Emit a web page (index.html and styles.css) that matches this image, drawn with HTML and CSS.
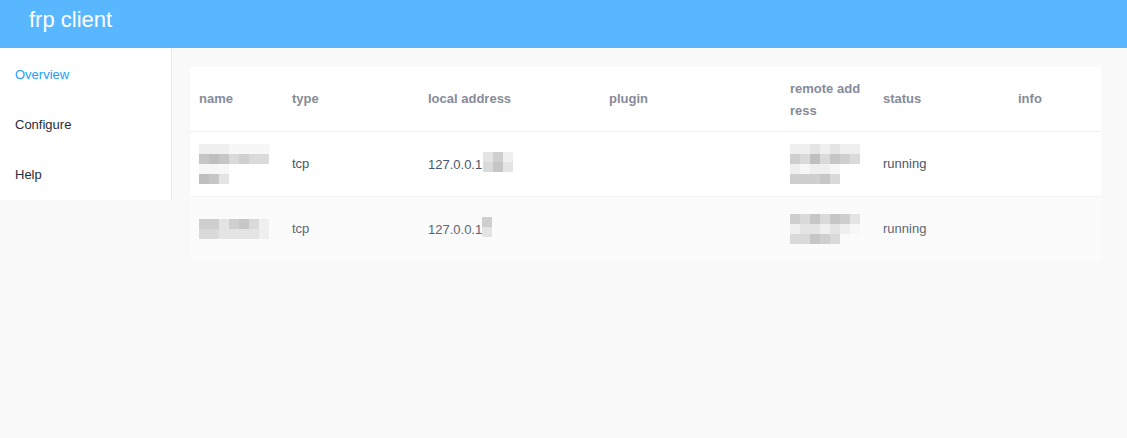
FILE: index.html
```html
<!DOCTYPE html>
<html>
<head>
<meta charset="utf-8">
<title>frp client</title>
<link rel="stylesheet" href="styles.css">
</head>
<body>
<header class="topbar"><span class="brand">frp client</span></header>
<div class="layout">
  <aside class="sidebar">
    <ul class="menu">
      <li class="menu-item active">Overview</li>
      <li class="menu-item">Configure</li>
      <li class="menu-item">Help</li>
    </ul>
  </aside>
  <main class="main">
    <table class="proxies">
      <colgroup>
        <col class="c-name"><col class="c-type"><col class="c-local"><col class="c-plugin"><col class="c-remote"><col class="c-status"><col class="c-info">
      </colgroup>
      <thead>
        <tr>
          <th>name</th><th>type</th><th>local address</th><th>plugin</th><th class="wrap">remote address</th><th>status</th><th>info</th>
        </tr>
      </thead>
      <tbody>
        <tr class="row-1">
          <td>
            <div class="pix">
              <div class="pr"><i class="q6"></i><i class="q6"></i><i class="q6"></i><i class="q7"></i><i class="q7"></i><i class="q7"></i><i class="q7"></i></div>
              <div class="pr"><i class="q2"></i><i class="q1"></i><i class="q2"></i><i class="q4"></i><i class="q3"></i><i class="q4"></i><i class="q4"></i></div>
              <div class="pr"><i class="q7"></i><i class="q7"></i><i class="q7"></i><i class="q0"></i></div>
              <div class="pr"><i class="q1"></i><i class="q2"></i><i class="q5"></i></div>
            </div>
          </td>
          <td>tcp</td>
          <td><span class="addr">127.0.0.1:</span><span class="pix inl shift"><span class="pr"><i class="q5"></i><i class="q3"></i><i class="q6"></i></span><span class="pr"><i class="q4"></i><i class="q2"></i><i class="q5"></i></span></span></td>
          <td></td>
          <td>
            <div class="pix">
              <div class="pr"><i class="q6"></i><i class="q6"></i><i class="q5"></i><i class="q6"></i><i class="q5"></i><i class="q6"></i><i class="q6"></i></div>
              <div class="pr"><i class="q3"></i><i class="q4"></i><i class="q1"></i><i class="q4"></i><i class="q2"></i><i class="q3"></i><i class="q4"></i></div>
              <div class="pr"><i class="q6"></i><i class="q7"></i><i class="q6"></i><i class="q6"></i><i class="q7"></i></div>
              <div class="pr"><i class="q3"></i><i class="q3"></i><i class="q3"></i><i class="q2"></i><i class="q4"></i></div>
            </div>
          </td>
          <td>running</td>
          <td></td>
        </tr>
        <tr class="row-2">
          <td>
            <div class="pix">
              <div class="pr"><i class="q3"></i><i class="q3"></i><i class="q5"></i><i class="q3"></i><i class="q2"></i><i class="q4"></i><i class="q6"></i></div>
              <div class="pr"><i class="q4"></i><i class="q4"></i><i class="q5"></i><i class="q5"></i><i class="q5"></i><i class="q5"></i><i class="q6"></i></div>
            </div>
          </td>
          <td>tcp</td>
          <td><span class="addr">127.0.0.1</span><span class="pix inl"><span class="pr"><i class="q3"></i></span><span class="pr"><i class="q5"></i></span></span></td>
          <td></td>
          <td>
            <div class="pix">
              <div class="pr"><i class="q3"></i><i class="q4"></i><i class="q2"></i><i class="q4"></i><i class="q2"></i><i class="q3"></i><i class="q5"></i></div>
              <div class="pr"><i class="q6"></i><i class="q5"></i><i class="q5"></i><i class="q6"></i><i class="q5"></i><i class="q6"></i><i class="q7"></i></div>
              <div class="pr"><i class="q4"></i><i class="q4"></i><i class="q2"></i><i class="q3"></i><i class="q4"></i></div>
            </div>
          </td>
          <td>running</td>
          <td></td>
        </tr>
      </tbody>
    </table>
  </main>
</div>
</body>
</html>
```
FILE: styles.css
```css
html, body {
  margin: 0;
  padding: 0;
  height: 100%;
  background: #f9f9f9;
  font-family: "Liberation Sans", Arial, sans-serif;
}

.topbar {
  height: 48px;
  background: #58b7ff;
  box-sizing: border-box;
  padding: 0 0 0 29px;
}

.brand {
  display: block;
  color: #ffffff;
  font-size: 22px;
  line-height: 40px;
}

.layout {
  display: flex;
  align-items: flex-start;
}

.sidebar {
  width: 171px;
  flex: none;
  height: 152px;
  background: #ffffff;
  border-right: 1px solid #e9e9e9;
}

.menu {
  list-style: none;
  margin: 0;
  padding: 2px 0 0;
}

.menu-item {
  height: 50px;
  line-height: 50px;
  padding-left: 15px;
  font-size: 13px;
  color: #1f2d3d;
}

.menu-item.active {
  color: #20a0ff;
}

.main {
  flex: 1;
  padding: 19px 26px 0 18px;
}

.proxies {
  width: 911px;
  table-layout: fixed;
  border-collapse: collapse;
  background: #ffffff;
  font-size: 13px;
}

.c-name { width: 93px; }
.c-type { width: 136px; }
.c-local { width: 181px; }
.c-plugin { width: 181px; }
.c-remote { width: 93px; }
.c-status { width: 135px; }
.c-info { width: 92px; }

.proxies th {
  height: 63px;
  padding: 0 9px;
  text-align: left;
  font-weight: bold;
  color: #878b99;
  line-height: 22px;
  border-bottom: 1px solid #eceff5;
  vertical-align: middle;
}

.proxies th.wrap {
  word-break: break-all;
  padding-top: 1px;
}

.proxies td {
  padding: 0 9px;
  color: #48576a;
  vertical-align: middle;
  line-height: 20px;
}

.row-1 td {
  height: 64px;
  border-bottom: 1px solid #f3f4f7;
}

.row-2 {
  background: #fbfbfb;
}

.row-2 td {
  height: 64px;
  color: #5a6674;
}

.pix {
  display: flex;
  flex-direction: column;
}

.pix.inl {
  display: inline-flex;
  vertical-align: middle;
  margin-top: -4px;
}

.pix.shift {
  margin-left: -3px;
}

.pr {
  display: flex;
}

.pr i {
  display: block;
  width: 10px;
  height: 10px;
}

.addr {
  vertical-align: middle;
}

.q0 { background: #ffffff; }
.q1 { background: #bfbfbf; }
.q2 { background: #c6c6c6; }
.q3 { background: #cfcfcf; }
.q4 { background: #dadada; }
.q5 { background: #e4e4e4; }
.q6 { background: #efefef; }
.q7 { background: #f7f7f7; }
```
